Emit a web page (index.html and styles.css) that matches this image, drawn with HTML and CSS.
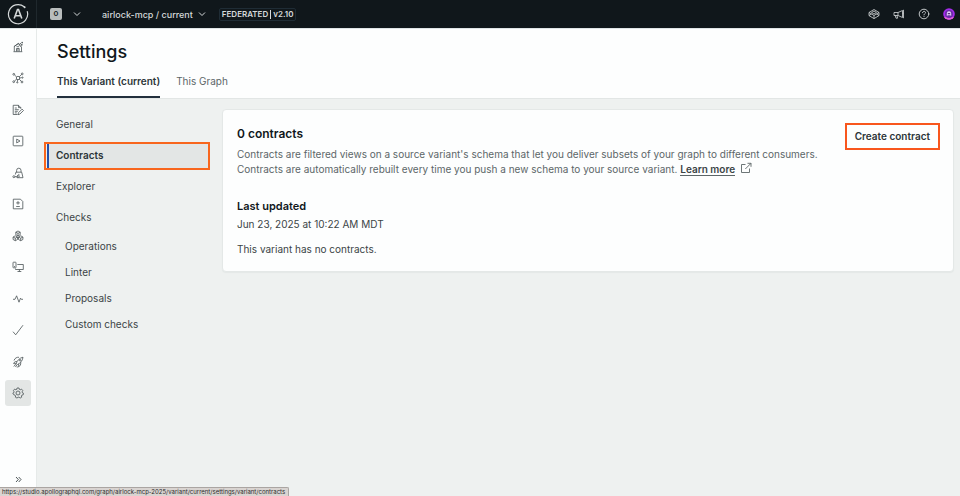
FILE: index.html
```html
<!DOCTYPE html>
<html lang="en">
<head>
    <meta charset="UTF-8">
    <meta name="viewport" content="width=device-width, initial-scale=1.0">
    <title>Settings - Contracts</title>
    <link rel="stylesheet" href="styles.css">
</head>
<body>

<header class="topbar">
    <a class="logo" href="#" aria-label="Home">
        <svg width="22" height="22" viewBox="0 0 22 22" fill="none" stroke="currentColor">
            <path d="M17.2 3.8A9.6 9.6 0 1 0 20.3 8.6" stroke-width="1.2" stroke-linecap="round"/>
            <circle cx="17.6" cy="4.2" r="1" fill="currentColor" stroke="none"/>
            <path d="M7.2 15.500L10.500 6.500h1L14.800 15.500M8.600 12.700h4.800" stroke-width="1.600"/>
        </svg>
    </a>
    <button class="org-button" aria-label="Organization">
        <span class="org-badge">o</span>
        <svg width="8" height="8" viewBox="0 0 8 8" fill="none" stroke="currentColor"><path d="M1 2.5l3 3 3-3"/></svg>
    </button>
    <button class="graph-button">
        airlock-mcp / current
        <svg width="8" height="8" viewBox="0 0 8 8" fill="none" stroke="currentColor"><path d="M1 2.5l3 3 3-3"/></svg>
    </button>
    <span class="version"><span>FEDERATED</span><span class="version-number">v2.10</span></span>
    <div class="top-actions">
        <button aria-label="Sandbox">
            <svg width="12" height="12" viewBox="0 0 12 12" fill="none" stroke="currentColor" stroke-width=".8" stroke-linejoin="round">
                <path d="M6 1.5l5 3v3.1l-5 3-5-3V4.500zM1 4.500l5 3 5-3M6 7.500v3M3.600 4.500L6 3l2.400 1.500L6 6zM1 7.500l2.500-1.500M11 7.500L8.500 6"/>
            </svg>
        </button>
        <button aria-label="What's new">
            <svg width="12" height="12" viewBox="0 0 12 12" fill="none" stroke="currentColor" stroke-width=".8" stroke-linejoin="round">
                <path d="M1 4.500h4l4.500-2v7L5 7.500H1zM5 4.500v3M2.300 7.500l.7 2.700h1.600L4 7.500M10.500 1.800v8.400M9.500 5.200h1"/>
            </svg>
        </button>
        <button aria-label="Help">
            <svg width="12" height="12" viewBox="0 0 12 12" fill="none" stroke="currentColor" stroke-width=".9" stroke-linecap="round">
                <circle cx="6" cy="6" r="4.800"/>
                <path d="M4.500 4.700C4.600 2.800 7.500 2.900 7.500 4.600 7.500 5.700 6 5.700 6 6.900M6 8.500v.1"/>
            </svg>
        </button>
        <button aria-label="Account">
            <svg width="12" height="12" viewBox="0 0 12 12">
                <circle cx="6" cy="6" r="5.800" fill="#a32bea"/>
                <path d="M1 9a5.800 5.800 0 0 0 10 0z" fill="#e05ad9"/>
                <circle cx="6" cy="6" r="4" fill="#6a2aa8"/>
                <path d="M3.800 8V5.500a2.200 2.200 0 0 1 4.400 0V8L7 7.200H5z" fill="#e3cdf7"/>
                <path d="M4.800 5.700h2.400" stroke="#35105f"/>
            </svg>
        </button>
    </div>
</header>

<div class="app">
    <nav class="sidebar" aria-label="Graph">
        <div class="sidebar-items">
            <a href="#" aria-label="Home"><svg viewBox="0 0 12 12"><path d="M1.500 10.700h8.800M2.300 10.500V5.300L6.500 2.300M2 5.600L7 2.200M9.500 10.500V5.500M4.500 10.500V7.500h2.700v3M5.900 7.500v3M4.500 5.700h2.600M8.300 2.200l.8 1.200 1.400.4-1.400.5-.5 1.300-.6-1.300-1.300-.5 1.300-.4zM10.200.8v1.600M9.400 1.600H11"/></svg></a>
            <a href="#" aria-label="Schema"><svg viewBox="0 0 12 12"><circle cx="6" cy="6" r="1.700"/><circle cx="1.800" cy="2.300" r=".9"/><circle cx="10.200" cy="1.900" r=".9"/><circle cx="1.700" cy="9.700" r=".9"/><circle cx="10" cy="10" r=".9"/><circle cx="10.500" cy="5.600" r=".6"/><circle cx="5.300" cy="10.400" r=".6"/><path d="M2.500 3l2.200 2M9.500 2.600L7.200 4.800M2.400 9l2.400-1.900M9.300 9.300L7.200 7.200M7.700 6l2-.3M5.700 7.700l-.3 2"/></svg></a>
            <a href="#" aria-label="Changelog"><svg viewBox="0 0 12 12"><path d="M5.500 10.500H1.200V1.300h5.300l2.300 2.300v1.200M6.500 1.300v2.300h2.300M2.800 4h2M2.800 5.700h4M2.800 7.300h3M2.800 8.900h2M6 10.700l.5-2 3.600-3.600 1.400 1.400-3.600 3.600z"/></svg></a>
            <a href="#" aria-label="Explorer"><svg viewBox="0 0 12 12"><rect x="1.200" y="1.200" width="9.600" height="9.600" rx=".6"/><path d="M4.700 4.100v3.800L8 6z"/></svg></a>
            <a href="#" aria-label="Persisted queries"><svg viewBox="0 0 12 12"><path d="M4.600 5.200V3.400a2.200 2.200 0 0 1 4.400 0v1.800M3.400 7.500l.5-2.300h5.800l1.300 5.500H5M6.800 6.900v1.200M5 8.300l3 1"/><circle cx="1.900" cy="9.700" r="1"/><path d="M2.900 9.700h3.300v1M4.900 9.700v.9"/></svg></a>
            <a href="#" aria-label="Proposals"><svg viewBox="0 0 12 12"><path d="M1.300 1.200h7.200l2.300 2.300v7.300H1.300zM6 3.100v3.500M4.200 4.900h3.600M4.200 8.500h3.600"/></svg></a>
            <a href="#" aria-label="Subgraphs"><svg viewBox="0 0 12 12"><path d="M6 1l2.200 1.200v2.500L6 5.900 3.800 4.700V2.200zM3.800 2.200L6 3.400l2.200-1.200M6 3.400v2.500M3.300 5.800l2.200 1.200v2.500l-2.200 1.200-2.200-1.200V7zM1.100 7l2.200 1.200L5.500 7M3.300 8.200v2.500M8.700 5.800l2.200 1.200v2.500l-2.200 1.200-2.200-1.200V7zM6.500 7l2.200 1.200L10.900 7M8.700 8.200v2.500"/></svg></a>
            <a href="#" aria-label="Clients"><svg viewBox="0 0 12 12"><rect x="1" y="1.200" width="3" height="5.600" rx=".5"/><path d="M2 5.600h1M5.300 3.500h6v5H3.500V7.600M7.400 8.500v1.900M5.500 10.500h3.800"/></svg></a>
            <a href="#" aria-label="Insights"><svg viewBox="0 0 12 12"><path d="M1 6.300h2l1.600-3.500L7 9.200l1.500-4 .8 1.100H11"/></svg></a>
            <a href="#" aria-label="Checks"><svg viewBox="0 0 12 12"><path d="M1 7.700l2.700 3.100L11 1.200"/></svg></a>
            <a href="#" aria-label="Launches"><svg viewBox="0 0 12 12"><path d="M4.200 7.600C5 4.800 7.300 2 11 1.200c-.3 3.700-3 6.100-5.500 7.300zM4.900 5.400L2.700 5.900 1.600 7.600l2.600.1M6.600 7.900l.1 2.700 1.700-1.300.5-3M3.700 8.200l-1.900 2.300M5 9L3.200 10.700"/><circle cx="8.100" cy="4.200" r=".8"/><path d="M2 4.500C2.800 2 5 1 7 1.300M4.500 10.800c1 .3 1.700.2 2.200-.2"/></svg></a>
            <a class="active" href="#" aria-label="Settings"><svg viewBox="0 0 12 12"><path d="M5 1h2l.4 1.400.8.400L9.500 2.100l1.300 1.500-.7 1.200.2.800 1.100.5-.2 1.700-1.400.4-.4.700.3 1.300-1.600.9-1-.9h-1l-1.100.9-1.600-.9.200-1.300-.5-.7-1.300-.4L.8 6.100l1.100-.5.200-.8-.7-1.200 1.200-1.500 1.300.7.800-.4z"/><circle cx="6" cy="6" r="2"/></svg></a>
        </div>
        <button class="expand" aria-label="Expand sidebar">
            <svg width="7" height="7" viewBox="0 0 7 7" fill="none" stroke="currentColor" stroke-width=".9"><path d="M1 1l2.300 2.500L1 6M3.700 1L6 3.500 3.700 6"/></svg>
        </button>
    </nav>

    <main class="page">
        <div class="page-header">
            <h1>Settings</h1>
            <div class="tabs">
                <a class="tab selected" href="#">This Variant (current)</a>
                <a class="tab" href="#">This Graph</a>
            </div>
        </div>

        <div class="page-body">
            <nav class="settings-nav" aria-label="Settings">
                <a href="#">General</a>
                <a class="current" href="#">Contracts</a>
                <a href="#">Explorer</a>
                <a href="#">Checks</a>
                <div class="sub-nav">
                    <a href="#">Operations</a>
                    <a href="#">Linter</a>
                    <a href="#">Proposals</a>
                    <a href="#">Custom checks</a>
                </div>
            </nav>

            <section class="card">
                <div class="card-top">
                    <div class="intro">
                        <h2>0 contracts</h2>
                        <p>Contracts are filtered views on a source variant's schema that let you deliver subsets of your graph to different consumers. Contracts are automatically rebuilt every time you push a new schema to your source variant.
                            <a class="learn-more" href="#">Learn more</a>
                            <svg class="external" width="12" height="12" viewBox="0 0 12 12" fill="none" stroke="currentColor" stroke-width=".9"><path d="M5.500 2.500h-4v8h8v-4M7.500 1.300H11v3.500M11 1.300L5.300 7"/></svg>
                        </p>
                    </div>
                    <button class="create">Create contract</button>
                </div>
                <h3>Last updated</h3>
                <p class="updated">Jun 23, 2025 at 10:22 AM MDT</p>
                <p class="empty">This variant has no contracts.</p>
            </section>
        </div>
    </main>
</div>

<div class="status-url">https://studio.apollographql.com/graph/airlock-mcp-2025/variant/current/settings/variant/contracts</div>

</body>
</html>
```
FILE: styles.css
```css
* {
    box-sizing: border-box;
}
body {
    margin: 0;
    min-height: 100vh;
    display: flex;
    flex-direction: column;
    font-family: Inter, sans-serif;
    font-size: 10px;
    line-height: 15px;
    color: #3b4446;
    background-color: #eef1f0;
}
h1, h2, h3, p {
    margin: 0;
}
a {
    color: inherit;
    text-decoration: none;
}
button {
    padding: 0;
    border: none;
    background: none;
    color: inherit;
    font: inherit;
    cursor: pointer;
}
svg {
    display: block;
}

/* Top bar */
.topbar {
    display: flex;
    align-items: center;
    height: 29px;
    padding-right: 5px;
    background-color: #10171b;
    border-bottom: 1px solid #dfe4e6;
    color: #d5d9da;
}
.logo {
    display: flex;
    align-items: center;
    justify-content: center;
    width: 37px;
    height: 28px;
    border-right: 1px solid #1f282d;
}
.org-button {
    display: flex;
    align-items: center;
    gap: 11px;
    margin-left: 13px;
}
.org-badge {
    width: 12px;
    height: 12px;
    border-radius: 2px;
    background-color: #b9bdbd;
    color: #20282b;
    font-size: 8px;
    font-weight: 600;
    line-height: 11px;
}
.graph-button {
    display: flex;
    align-items: center;
    gap: 5px;
    margin-left: 21px;
    font-size: 9px;
    font-weight: 500;
}
.version {
    display: flex;
    align-items: center;
    gap: 2px;
    height: 13px;
    margin-left: 13px;
    padding: 0 2px;
    border: 1px solid #1f2c35;
    border-radius: 2px;
    font-size: 8px;
    font-weight: 600;
    line-height: 9px;
}
.version-number {
    padding-left: 2px;
    border-left: 1px solid #d5d9da;
}
.top-actions {
    display: flex;
    gap: 13px;
    margin-left: auto;
}

/* Icon sidebar */
.app {
    flex: 1;
    display: flex;
}
.sidebar {
    display: flex;
    flex-direction: column;
    align-items: center;
    justify-content: space-between;
    width: 37px;
    padding: 5px 0 13px;
    background-color: #fdfefe;
    border-right: 1px solid #e6eae9;
}
.sidebar-items {
    display: flex;
    flex-direction: column;
    justify-content: space-between;
    height: 75vh;
}
.sidebar-items a {
    display: flex;
    align-items: center;
    justify-content: center;
    width: 26px;
    height: 26px;
    border-radius: 3px;
}
.sidebar-items .active {
    background-color: #e3e6e5;
}
.sidebar-items svg {
    width: 12px;
    height: 12px;
    fill: none;
    stroke: #4a5355;
    stroke-width: .8;
    stroke-linejoin: round;
}

/* Page */
.page {
    flex: 1;
    min-width: 0;
}
.page-header {
    padding: 10px 20px 0;
    background-color: #fdfefe;
    border-bottom: 1px solid #e2e6e5;
}
h1 {
    font-size: 18px;
    font-weight: 500;
    line-height: 26px;
    color: #10171b;
}
.tabs {
    display: flex;
    gap: 16px;
    margin-top: 7px;
}
.tab {
    padding: 2px 0 7px;
    border-bottom: 2px solid transparent;
    color: #5c6668;
}
.tab.selected {
    border-color: #22303d;
    color: #2c3538;
    font-weight: 600;
}
.page-body {
    display: flex;
    align-items: flex-start;
    gap: 12px;
    padding: 10px 6px 10px 7px;
}

/* Settings navigation */
.settings-nav {
    display: flex;
    flex-direction: column;
    gap: 3px;
    width: 166px;
    padding-top: 2px;
}
.settings-nav a {
    padding: 6px 12px 7px;
}
.settings-nav .current {
    padding: 4px 10px 5px;
    border: 2px solid #f8661d;
    background-color: #e3e6e5;
    box-shadow: inset 1px 0 #eef1f0, inset 3px 0 #2350a8;
    font-weight: 600;
    color: #2c3538;
}
.sub-nav {
    display: flex;
    flex-direction: column;
}
.sub-nav a {
    padding: 4px 21px 7px;
}

/* Contracts card */
.card {
    flex: 1;
    min-width: 0;
    padding: 13px 13px 14px 14px;
    border: 1px solid #e4e8e7;
    border-radius: 4px;
    background-color: #fdfefe;
    box-shadow: 0 1px 1px #e4e8e7;
}
.card-top {
    display: flex;
    align-items: flex-start;
    justify-content: space-between;
    gap: 20px;
}
h2 {
    font-size: 12px;
    font-weight: 600;
    line-height: 22px;
    color: #10171b;
}
.intro p {
    margin-top: 2px;
    color: #5c6668;
}
.learn-more {
    border-bottom: 1px solid #5c6668;
    color: #3b4446;
    font-weight: 600;
}
.external {
    display: inline-block;
    margin-left: 2px;
    vertical-align: -1px;
}
.create {
    flex-shrink: 0;
    padding: 2px 8px;
    border: 2px solid #f8561d;
    color: #2c3538;
    font-weight: 600;
    line-height: 19px;
}
h3 {
    margin-top: 22px;
    font-size: 11px;
    font-weight: 600;
    color: #10171b;
}
.updated {
    margin-top: 3px;
}
.empty {
    margin-top: 10px;
}

/* Link target shown by the browser */
.status-url {
    position: fixed;
    left: 0;
    bottom: 0;
    padding: 0 3px 0 2px;
    border: 1px solid #aaa5a2;
    border-left: none;
    border-bottom: none;
    border-top-right-radius: 2px;
    background-color: #d9d4d1;
    color: #2b2b2b;
    font-size: 6px;
    line-height: 8px;
}
```
